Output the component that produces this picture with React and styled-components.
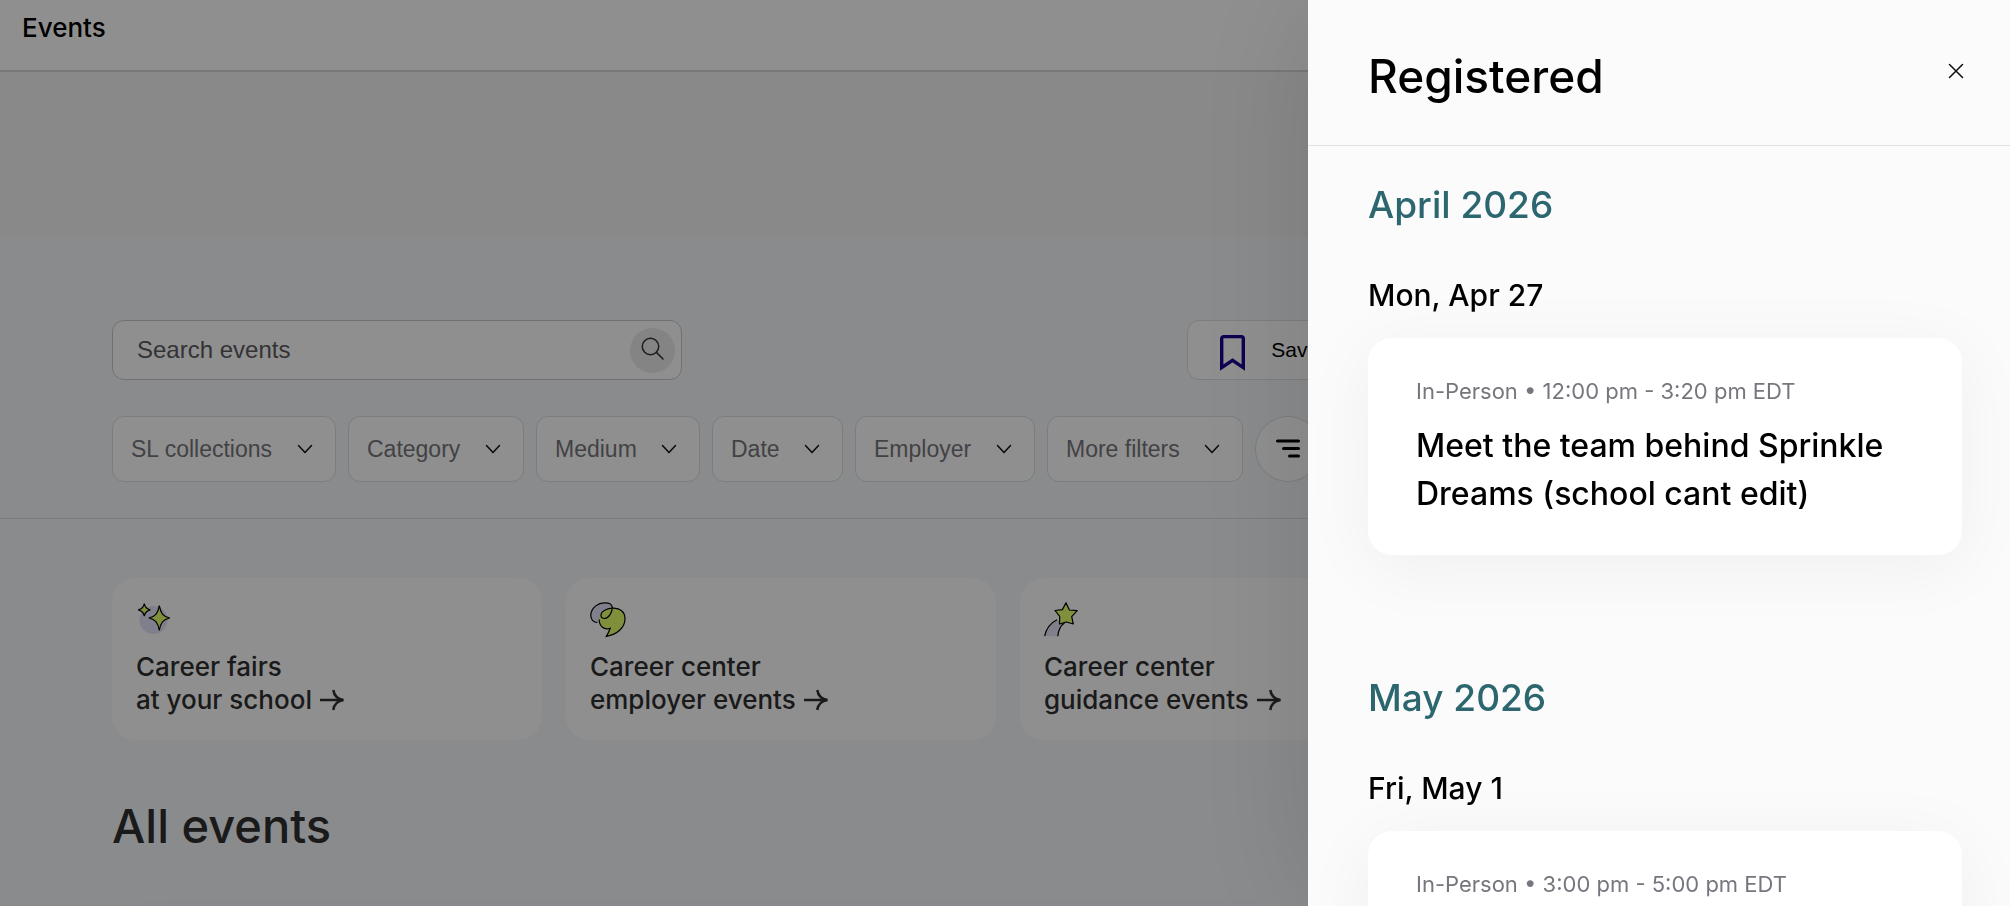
import React from 'react';
import styled, { createGlobalStyle } from 'styled-components';

const theme = {
  font: "Inter, 'Liberation Sans', Arial, sans-serif",
  controlFont: "'Liberation Sans', Arial, sans-serif",
  black: '#000',
  ink: '#2f2f31',
  grey: '#76767e',
  teal: '#2c666f',
  lime: '#e3ff6b',
  lavender: '#e4e5fb',
};

const GlobalStyle = createGlobalStyle`
  *, *::before, *::after {
    box-sizing: border-box;
  }
  body {
    margin: 0;
    overflow: hidden;
    font-family: ${theme.font};
    color: ${theme.black};
  }
  h1, h2, h3, h4, p {
    margin: 0;
    font-weight: 500;
  }
  button, input, select {
    font-family: ${theme.controlFont};
  }
`;

const StyledPage = styled.div`
  height: 100vh;
  overflow: hidden;
  background: #f6f8fc;
`;

const StyledTopBar = styled.header`
  padding: 12px 22px 26px;
  background: #fff;
  border-bottom: 2px solid #d6d6d6;
`;

const StyledPageName = styled.p`
  font-size: 26px;
  line-height: 32px;
`;

const StyledBanner = styled.div`
  height: 164px;
  background: #f4f4f4;
`;

const StyledFilters = styled.section`
  display: flex;
  flex-direction: column;
  gap: 36px;
  padding: 84px 106px 36px 112px;
  border-bottom: 1px solid #dcdee2;
`;

const StyledToolbar = styled.div`
  display: flex;
  justify-content: space-between;
`;

const StyledSearch = styled.form`
  display: flex;
  align-items: center;
  width: 570px;
  height: 60px;
  padding: 0 6px 0 24px;
  background: #fff;
  border: 1px solid #c9cacd;
  border-radius: 12px;
`;

const StyledSearchInput = styled.input`
  flex: 1;
  min-width: 0;
  padding: 0;
  border: 0;
  outline: 0;
  background: none;
  font-size: 24px;
  line-height: 32px;
  &::placeholder {
    color: #5c5c60;
    opacity: 1;
  }
`;

const StyledSearchButton = styled.button`
  display: flex;
  align-items: center;
  justify-content: center;
  width: 45px;
  height: 45px;
  padding: 0;
  border: 0;
  border-radius: 50%;
  background: #ececec;
`;

const StyledActions = styled.div`
  flex: 0 0 40%;
`;

const StyledSavedButton = styled.button`
  display: flex;
  align-items: center;
  gap: 26px;
  height: 60px;
  padding: 0 32px;
  border: 1px solid #dcdee2;
  border-radius: 12px;
  background: #fff;
  color: ${theme.black};
  font-size: 21px;
`;

const StyledPills = styled.div`
  display: flex;
  gap: 12px;
`;

const StyledPill = styled.label`
  display: grid;
  align-items: center;
  height: 66px;
  background: #fff;
  border: 1px solid #dcdee2;
  border-radius: 12px;
  & > * {
    grid-area: 1 / 1;
  }
  svg {
    justify-self: end;
    margin-right: 22px;
    pointer-events: none;
  }
`;

const StyledSelect = styled.select`
  height: 100%;
  padding: 0 62px 0 18px;
  border: 0;
  outline: 0;
  appearance: none;
  background: none;
  color: #76777c;
  font-size: 23px;
`;

const StyledSortButton = styled.button`
  display: flex;
  align-items: center;
  justify-content: center;
  width: 66px;
  height: 66px;
  padding: 0;
  border: 1px solid #dcdee2;
  border-radius: 50%;
  background: #fff;
`;

const StyledCollections = styled.nav`
  display: grid;
  grid-template-columns: repeat(4, 1fr);
  gap: 24px;
  padding: 59px 106px 58px 112px;
`;

const StyledCollection = styled.a`
  display: flex;
  flex-direction: column;
  gap: 12px;
  padding: 24px;
  border-radius: 24px;
  background: #fff;
  color: ${theme.ink};
  font-size: 26px;
  font-weight: 500;
  line-height: 33px;
  text-decoration: none;
`;

const StyledLastLine = styled.span`
  display: flex;
  align-items: center;
  gap: 8px;
`;

const StyledResults = styled.section`
  padding: 0 106px 0 112px;
`;

const StyledResultsHeading = styled.h1`
  color: ${theme.ink};
  font-size: 47px;
  line-height: 56px;
`;

const StyledResultsPanel = styled.div`
  height: 320px;
  margin-top: 72px;
  border-radius: 24px;
  background: #fff;
  box-shadow: 0 8px 48px rgba(60, 20, 120, 0.06);
`;

const StyledOverlay = styled.div`
  position: fixed;
  inset: 0;
  display: flex;
  justify-content: flex-end;
  background: rgba(0, 0, 0, 0.44);
`;

const StyledDrawer = styled.aside`
  width: 702px;
  max-width: 100%;
  height: 100%;
  overflow: hidden;
  background: #fbfbfb;
  box-shadow: 0 0 120px rgba(0, 0, 0, 0.13);
`;

const StyledDrawerHeader = styled.header`
  display: flex;
  justify-content: space-between;
  padding: 48px 31px 40px 60px;
  border-bottom: 1px solid #e2e2e4;
`;

const StyledDrawerTitle = styled.h2`
  font-size: 46px;
  line-height: 57px;
`;

const StyledCloseButton = styled.button`
  display: flex;
  align-items: center;
  justify-content: center;
  width: 46px;
  height: 46px;
  padding: 0;
  border: 0;
  background: none;
`;

const StyledDrawerBody = styled.div`
  display: flex;
  flex-direction: column;
  gap: 120px;
  padding: 36px 48px 48px 60px;
`;

const StyledMonth = styled.h3`
  margin-bottom: 48px;
  color: ${theme.teal};
  font-size: 37px;
  line-height: 46px;
`;

const StyledDay = styled.h4`
  margin-bottom: 24px;
  font-size: 30px;
  line-height: 38px;
`;

const StyledEventCard = styled.article`
  min-height: 217px;
  padding: 40px 48px 37px;
  border-radius: 24px;
  background: #fff;
  box-shadow: 0 12px 72px rgba(0, 0, 0, 0.05);
`;

const StyledEventMeta = styled.p`
  color: ${theme.grey};
  font-size: 22px;
  font-weight: 400;
  line-height: 26px;
`;

const StyledEventTitle = styled.p`
  margin-top: 18px;
  font-size: 32px;
  line-height: 48px;
`;

const SearchIcon = () => (
  <svg width="26" height="26" viewBox="0 0 26 26" fill="none" stroke="#333" strokeWidth="1.5">
    <circle cx="10.5" cy="9.5" r="8.2" />
    <path d="M16.4 15.4L23 22" strokeLinecap="round" />
  </svg>
);

const BookmarkIcon = () => (
  <svg width="25" height="42" viewBox="0 -6 25 42" fill="none" stroke="#1e0091" strokeWidth="3.4">
    <path d="M1.7 32.6V3.6a2 2 0 0 1 2-2h17.6a2 2 0 0 1 2 2v29L12.5 25.4z" />
  </svg>
);

const ChevronIcon = () => (
  <svg width="16" height="10" viewBox="0 0 16 10" fill="none" stroke="#111" strokeWidth="1.5">
    <path d="M1.5 1.5L8 8.5l6.5-7" strokeLinecap="round" strokeLinejoin="round" />
  </svg>
);

const SortIcon = () => (
  <svg width="24" height="20" viewBox="0 0 24 20" fill="none" stroke="#000" strokeWidth="3">
    <path d="M1.5 2h21M7.5 9.5h15M13.5 17h9" strokeLinecap="round" />
  </svg>
);

const CloseIcon = () => (
  <svg width="16" height="16" viewBox="0 0 16 16" fill="none" stroke="#111" strokeWidth="1.5">
    <path d="M1.5 1.5l13 13M14.5 1.5l-13 13" strokeLinecap="round" />
  </svg>
);

const ArrowIcon = () => (
  <svg width="24" height="22" viewBox="0 0 24 22" fill="none" stroke={theme.ink} strokeWidth="2.5">
    <path d="M0 11h22" />
    <path d="M13.3 1C14 6 17 10 23.5 11C17 12 14 16 13.3 21" strokeLinejoin="bevel" />
  </svg>
);

const SparklesIcon = () => (
  <svg width="36" height="36" viewBox="0 0 36 36">
    <circle cx="17.5" cy="18" r="14" fill={theme.lavender} />
    <g fill={theme.lime} stroke="#000" strokeWidth="1.2">
      <path d="M8.3 1.6C9 5.5 10.5 7 14.3 7.9C10.5 8.8 9 10.3 8.3 14.2C7.6 10.3 6 8.8 2.2 7.9C6 7 7.6 5.5 8.3 1.6z" />
      <path d="M23.3 3.6C24.6 11 27 14.5 33.8 16C27 17.5 24.6 21 23.3 28.4C22 21 19.6 17.5 12.8 16C19.6 14.5 22 11 23.3 3.6z" />
    </g>
  </svg>
);

const SpeechIcon = () => (
  <svg width="36" height="36" viewBox="0 0 36 36" strokeWidth="1.2">
    <path
      d="M7.5 20.5C3 20.5.8 17 .8 13.5C.8 5.5 8.5.8 15 .8c4.500 0 7.300 1.600 7.300 5L9.200 18z"
      fill={theme.lavender}
    />
    <path
      d="M22 6.200c7.500-.8 13 3.200 13 10.300C35 26 27 32.500 16.200 34.500c1.800-2.800 3-5.300 4-8.300C13.500 28.500 9.200 23.500 9.200 17.500C9.200 11.500 15.500 6.700 22 6.200z"
      fill={theme.lime}
    />
    <path
      d="M7.500 20.500C3 20.500.8 17 .8 13.500C.8 5.500 8.500.8 15 .8c4.500 0 7.300 1.600 7.300 5c0 5-4.300 10.700-8 10.700c-2 0-3.300-1.200-3.300-3.200c0-4.100 6-7.100 12-7.100c7.500 0 12 4 12 10.300C35 26 27 32.500 16.200 34.500c1.800-2.800 3-5.300 4-8.300C13.500 28.500 9.200 23.500 9.200 17.500"
      fill="none"
      stroke="#000"
    />
  </svg>
);

const ShootingStarIcon = () => (
  <svg width="36" height="36" viewBox="0 0 36 36" strokeWidth="1.2" strokeLinejoin="round">
    <path d="M.6 34.2C2.3 26.5 6.5 21 13 17.8l7.5 3.2C16.5 23.5 14.5 28 13.8 34.2z" fill={theme.lavender} />
    <path d="M.6 34.2C2.3 26.5 6.5 21 13 17.8M20.5 21C16.5 23.5 14.5 28 13.8 34.2" fill="none" stroke="#000" />
    <path
      d="M22 .8l3.400 7.200 7.800.7-5.500 5.900 1.600 7.400-7-2-6.800 2 .2-7.600-4.700-5.900 7.400-.9z"
      fill={theme.lime}
      stroke="#000"
    />
  </svg>
);

const filters = ['SL collections', 'Category', 'Medium', 'Date', 'Employer', 'More filters'];

const collections = [
  { first: 'Career fairs', last: 'at your school', Icon: SparklesIcon },
  { first: 'Career center', last: 'employer events', Icon: SpeechIcon },
  { first: 'Career center', last: 'guidance events', Icon: ShootingStarIcon },
];

const registered = [
  {
    month: 'April 2026',
    day: 'Mon, Apr 27',
    meta: 'In-Person • 12:00 pm - 3:20 pm EDT',
    title: 'Meet the team behind Sprinkle Dreams (school cant edit)',
  },
  { month: 'May 2026', day: 'Fri, May 1', meta: 'In-Person • 3:00 pm - 5:00 pm EDT' },
];

const EventsPage = () => (
  <StyledPage>
    <StyledTopBar>
      <StyledPageName>Events</StyledPageName>
    </StyledTopBar>
    <StyledBanner />
    <StyledFilters>
      <StyledToolbar>
        <StyledSearch>
          <StyledSearchInput type="text" placeholder="Search events" aria-label="Search events" />
          <StyledSearchButton type="button" aria-label="Search">
            <SearchIcon />
          </StyledSearchButton>
        </StyledSearch>
        <StyledActions>
          <StyledSavedButton type="button">
            <BookmarkIcon />
            Saved
          </StyledSavedButton>
        </StyledActions>
      </StyledToolbar>
      <StyledPills>
        {filters.map((name) => (
          <StyledPill key={name}>
            <StyledSelect aria-label={name}>
              <option>{name}</option>
            </StyledSelect>
            <ChevronIcon />
          </StyledPill>
        ))}
        <StyledSortButton type="button" aria-label="Sort">
          <SortIcon />
        </StyledSortButton>
      </StyledPills>
    </StyledFilters>
    <StyledCollections>
      {collections.map(({ first, last, Icon }) => (
        <StyledCollection href="#" key={last}>
          <Icon />
          <span>
            {first}
            <StyledLastLine>
              {last}
              <ArrowIcon />
            </StyledLastLine>
          </span>
        </StyledCollection>
      ))}
    </StyledCollections>
    <StyledResults>
      <StyledResultsHeading>All events</StyledResultsHeading>
      <StyledResultsPanel />
    </StyledResults>
  </StyledPage>
);

const RegisteredDrawer = () => (
  <StyledOverlay>
    <StyledDrawer role="dialog" aria-labelledby="drawer-title">
      <StyledDrawerHeader>
        <StyledDrawerTitle id="drawer-title">Registered</StyledDrawerTitle>
        <StyledCloseButton type="button" aria-label="Close">
          <CloseIcon />
        </StyledCloseButton>
      </StyledDrawerHeader>
      <StyledDrawerBody>
        {registered.map(({ month, day, meta, title }) => (
          <section key={month}>
            <StyledMonth>{month}</StyledMonth>
            <StyledDay>{day}</StyledDay>
            <StyledEventCard>
              <StyledEventMeta>{meta}</StyledEventMeta>
              {title && <StyledEventTitle>{title}</StyledEventTitle>}
            </StyledEventCard>
          </section>
        ))}
      </StyledDrawerBody>
    </StyledDrawer>
  </StyledOverlay>
);

const App = () => (
  <>
    <GlobalStyle />
    <EventsPage />
    <RegisteredDrawer />
  </>
);

export default App;
